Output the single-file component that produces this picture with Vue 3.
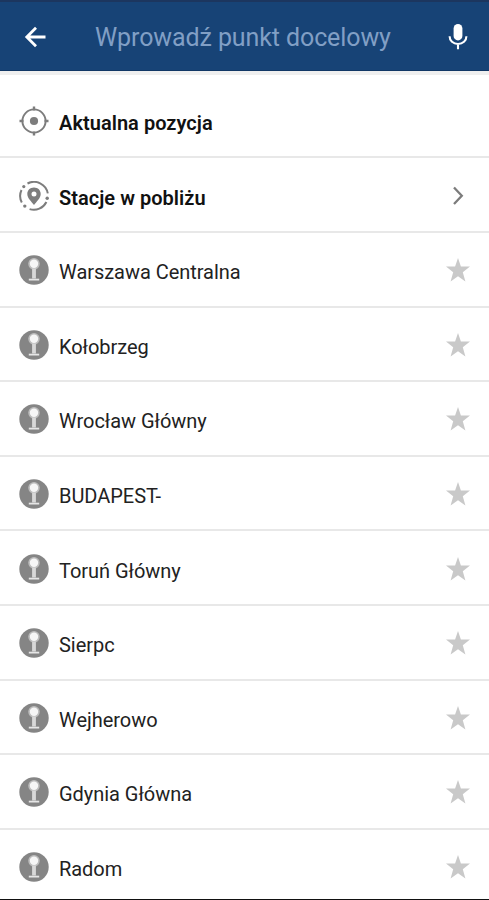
<script setup>
import { ref } from 'vue'

const query = ref('')

const stations = [
  'Warszawa Centralna',
  'Kołobrzeg',
  'Wrocław Główny',
  'BUDAPEST-',
  'Toruń Główny',
  'Sierpc',
  'Wejherowo',
  'Gdynia Główna',
  'Radom'
]
</script>

<template>
  <div class="screen">
    <header class="search-bar">
      <button class="icon-button" type="button" aria-label="Wstecz">
        <svg class="back-icon" viewBox="0 0 22 22">
          <path d="M21.5 11H3M12 1.8L2.8 11l9.2 9.2" />
        </svg>
      </button>
      <input v-model="query" class="search-input" type="text" placeholder="Wprowadź punkt docelowy">
      <button class="icon-button" type="button" aria-label="Szukaj głosowo">
        <svg class="mic-icon" viewBox="0 0 20 26">
          <rect x="5.6" y="0" width="8.8" height="16.4" rx="4.4" />
          <path d="M1.6 12.2c0 4.6 3.6 7.8 8.4 7.8s8.4-3.2 8.4-7.8M10 20v5.2" />
        </svg>
      </button>
    </header>

    <ul class="list">
      <li class="row strong">
        <svg class="row-icon" viewBox="0 0 30 30">
          <circle cx="15" cy="15" r="11.6" fill="none" stroke="#7d7d7d" stroke-width="1.9" />
          <circle cx="15" cy="15" r="4.1" fill="#7d7d7d" />
          <path d="M15 0.5v4M15 25.5v4M0.5 15h4M25.5 15h4" stroke="#7d7d7d" stroke-width="2.4" />
        </svg>
        <span class="label">Aktualna pozycja</span>
      </li>
      <li class="row strong">
        <svg class="row-icon" viewBox="0 0 30 30">
          <g fill="none" stroke="#7d7d7d" stroke-width="2">
            <path d="M8.5 2.5A14 14 0 0 1 28.8 12.4" />
            <path d="M27.4 21A14 14 0 0 1 10.6 28.1" />
            <path d="M2.8 21.5A14 14 0 0 1 2.5 9" />
          </g>
          <circle cx="4.8" cy="5.6" r="1.6" fill="#7d7d7d" />
          <circle cx="28.2" cy="17.2" r="1.7" fill="#7d7d7d" />
          <circle cx="5.8" cy="25.1" r="1.7" fill="#7d7d7d" />
          <path
            d="M15 6.5c-3.9 0-6.7 2.8-6.7 6.4 0 4.2 4.2 7.4 6.7 11.2 2.5-3.8 6.7-7 6.7-11.2 0-3.6-2.8-6.4-6.7-6.4zm0 3.9a2.5 2.5 0 1 1 0 5 2.5 2.5 0 0 1 0-5z"
            fill="#7d7d7d"
            fill-rule="evenodd"
          />
        </svg>
        <span class="label">Stacje w pobliżu</span>
        <svg class="chevron" viewBox="0 0 24 24">
          <path d="M8 3.5l7.8 8.3L8 20" />
        </svg>
      </li>
      <li v-for="station in stations" :key="station" class="row">
        <svg class="row-icon" viewBox="0 0 30 30">
          <circle cx="15" cy="15" r="14.7" fill="#858585" />
          <circle cx="15" cy="8.8" r="5" fill="#f6f6f6" stroke="#bcbcbc" stroke-width="1.6" />
          <path d="M13.1 13.5h3.8v10h-3.8z" fill="#d8d8d8" />
          <path d="M9.8 24.6h10.4" stroke="#e6e6e6" stroke-width="1.8" />
        </svg>
        <span class="label">{{ station }}</span>
        <svg class="star" viewBox="0 0 24 24">
          <path d="M12 0l2.9 8.4 9.1.2-7.2 5.6 2.6 9.2-7.4-5.2-7.4 5.2 2.6-9.2L0 8.6l9.1-.2z" />
        </svg>
      </li>
    </ul>
  </div>
</template>

<style>
body {
  margin: 0;
  background: #ffffff;
}
</style>

<style scoped>
.screen {
  display: flex;
  flex-direction: column;
  box-sizing: border-box;
  width: 100%;
  height: 900px;
  overflow: hidden;
  font-family: Roboto, sans-serif;
  background: #ffffff;
  border-bottom: 1px solid #111111;
}

.search-bar {
  display: flex;
  flex: none;
  align-items: center;
  box-sizing: border-box;
  height: 71px;
  padding: 2px 17px 0 21px;
  background: #174376;
  border-top: 2px solid #1c365f;
  border-bottom: 1px solid #113765;
}

.icon-button {
  display: flex;
  flex: none;
  align-items: center;
  justify-content: center;
  width: 28px;
  height: 36px;
  padding: 0;
  background: none;
  border: 0;
}

.back-icon {
  width: 22px;
  height: 22px;
  fill: none;
  stroke: #ffffff;
  stroke-width: 2.8;
}

.mic-icon {
  width: 20px;
  height: 26px;
  fill: none;
  stroke: #ffffff;
  stroke-width: 2.1;
}

.mic-icon rect {
  fill: #ffffff;
  stroke: none;
}

.search-input {
  flex: 1;
  min-width: 0;
  padding: 2px 0 0 46px;
  color: #ffffff;
  font: 400 25px/34px Roboto, sans-serif;
  letter-spacing: -0.1px;
  background: none;
  border: 0;
  outline: 0;
}

.search-input::placeholder {
  color: #819fc5;
  opacity: 1;
}

.list {
  flex: 1;
  margin: 0;
  padding: 8.8px 0 0;
  overflow: hidden;
  list-style: none;
  border-top: 4px solid #efefef;
}

.row {
  display: flex;
  align-items: center;
  box-sizing: border-box;
  height: 74.6px;
  padding: 2px 19px 0;
  border-bottom: 2px solid #e8e8e8;
}

.row:last-child {
  border-bottom-color: transparent;
}

.row-icon {
  flex: none;
  width: 30px;
  height: 30px;
}

.label {
  flex: 1;
  padding: 4px 0 0 10px;
  color: #222222;
  font-size: 20px;
  line-height: 26px;
  letter-spacing: -0.04px;
  white-space: nowrap;
}

.strong .label {
  color: #111111;
  font-weight: 600;
  letter-spacing: 0.03px;
}

.chevron {
  flex: none;
  width: 24px;
  height: 24px;
  fill: none;
  stroke: #7c7c7c;
  stroke-width: 2.3;
}

.star {
  flex: none;
  width: 24px;
  height: 24px;
  fill: #c9c9c9;
}
</style>
